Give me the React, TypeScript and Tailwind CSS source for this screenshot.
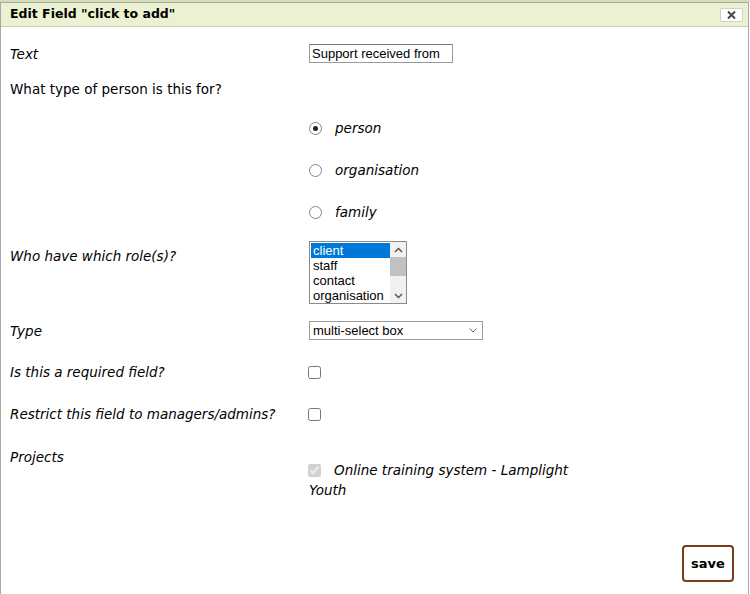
import React from 'react';

const font = "font-['DejaVu_Sans',Verdana,sans-serif]";
const ctrlFont = "font-['Liberation_Sans',Arial,sans-serif]";

function Radio({ label, checked = false, className = '' }: { label: string; checked?: boolean; className?: string }) {
  return (
    <div className={`flex items-center h-[16px] pl-[308px] ${className}`}>
      <span className="w-[13px] h-[13px] rounded-full border border-[#858585] bg-white flex items-center justify-center">
        {checked && <span className="w-[5px] h-[5px] rounded-full bg-[#222]" />}
      </span>
      <span className="ml-[13px] italic text-[13.5px] leading-[16px]">{label}</span>
    </div>
  );
}

function Listbox() {
  const opts = ['client', 'staff', 'contact', 'organisation'];
  return (
    <div className={`flex w-[98px] h-[63px] border border-[#8a8a8a] bg-white ${ctrlFont}`}>
      <div className="flex-1 pt-px pl-px">
        {opts.map((o, i) => (
          <div key={o} className={`h-[15px] pl-[2px] text-[13px] leading-[15px] ${i === 0 ? 'bg-[#0078d7] text-white' : 'text-black'}`}>{o}</div>
        ))}
      </div>
      {/* scrollbar */}
      <div className="w-[16px] flex flex-col bg-[#f1f1f1]">
        <div className="h-[15px] flex items-center justify-center">
          <svg width="9" height="6" viewBox="0 0 9 6"><path d="M1 5 L4.5 1.5 L8 5" fill="none" stroke="#505050" strokeWidth="1.4" /></svg>
        </div>
        <div className="h-[19px] bg-[#c1c1c1]" />
        <div className="flex-1" />
        <div className="h-[15px] flex items-center justify-center">
          <svg width="9" height="6" viewBox="0 0 9 6"><path d="M1 1 L4.5 4.5 L8 1" fill="none" stroke="#505050" strokeWidth="1.4" /></svg>
        </div>
      </div>
    </div>
  );
}

export default function App() {
  return (
    <div className={`w-[750px] h-[594px] bg-white overflow-hidden ${font}`}>
      <div className="h-[2px] bg-[#d8dcb4]" />
      <div className="w-[749px] h-[592px] border-l border-r border-t border-[#a8a8a8] bg-white">
        {/* Header */}
        <div className="h-[24px] flex items-center justify-between bg-[#ebf2d2] border-b border-[#c9cdb8] pl-[9px] pr-[5px]">
          <span className="text-[12.5px] font-bold text-black">Edit Field "click to add"</span>
          <button className="w-[23px] h-[14px] flex items-center justify-center bg-white border border-[#cfcfcf] rounded-[2px]">
            <svg width="9" height="8" viewBox="0 0 9 8"><path d="M1 0.5 L8 7.5 M8 0.5 L1 7.5" stroke="#444" strokeWidth="2" /></svg>
          </button>
        </div>

        {/* Text */}
        <div className="flex items-center mt-[17px] h-[19px]">
          <div className="w-[308px] pl-[9px] italic text-[13.5px] leading-[16px]">Text</div>
          <div className={`w-[144px] h-[19px] border border-[#9a9a9a] border-t-[#7a7a7a] pl-[2px] text-[13px] leading-[17px] ${ctrlFont}`}>Support received from</div>
        </div>

        <div className="mt-[18px] h-[16px] pl-[9px] text-[13.5px] leading-[16px]">What type of person is this for?</div>

        <Radio label="person" checked className="mt-[23px]" />
        <Radio label="organisation" className="mt-[26px]" />
        <Radio label="family" className="mt-[26px]" />

        <div className="flex mt-[21px]">
          <div className="w-[308px] pl-[9px] pt-[7px] italic text-[13.5px] leading-[16px]">Who have which role(s)?</div>
          <Listbox />
        </div>

        <div className="flex items-center mt-[17px] h-[19px]">
          <div className="w-[308px] pl-[9px] italic text-[13.5px] leading-[16px]">Type</div>
          <div className={`w-[174px] h-[19px] flex items-center justify-between border border-[#9a9a9a] pl-[3px] pr-[5px] text-[13px] ${ctrlFont}`}>
            <span>multi-select box</span>
            <svg width="8" height="5" viewBox="0 0 8 5"><path d="M0.5 0.5 L4 4 L7.5 0.5" fill="none" stroke="#666" strokeWidth="1" /></svg>
          </div>
        </div>

        <div className="flex items-center mt-[24px] h-[16px]">
          <div className="w-[308px] pl-[9px] italic text-[13.5px] leading-[16px]">Is this a required field?</div>
          <input type="checkbox" className="m-0 ml-[-1px] w-[13px] h-[13px]" />
        </div>

        <div className="flex items-center mt-[26px] h-[16px]">
          <div className="w-[308px] pl-[9px] italic text-[13.5px] leading-[16px]">Restrict this field to managers/admins?</div>
          <input type="checkbox" className="m-0 ml-[-1px] w-[13px] h-[13px]" />
        </div>

        <div className="flex mt-[27px]">
          <div className="w-[308px] pl-[9px] italic text-[13.5px] leading-[16px]">Projects</div>
          <div className="pt-[11px] w-[290px] italic text-[13.5px] leading-[20px]">
            <input type="checkbox" defaultChecked disabled className="m-0 ml-[-1px] w-[13px] h-[13px] align-[-2px]" />
            <span className="ml-[13px]">Online training system - Lamplight Youth</span>
          </div>
        </div>

        <div className="flex justify-end pr-[14px] mt-[45px]">
          <button className="w-[52px] h-[37px] border-2 border-[#7a3b1c] rounded-[4px] bg-white text-[13px] font-bold text-black">save</button>
        </div>
      </div>
    </div>
  );
}
